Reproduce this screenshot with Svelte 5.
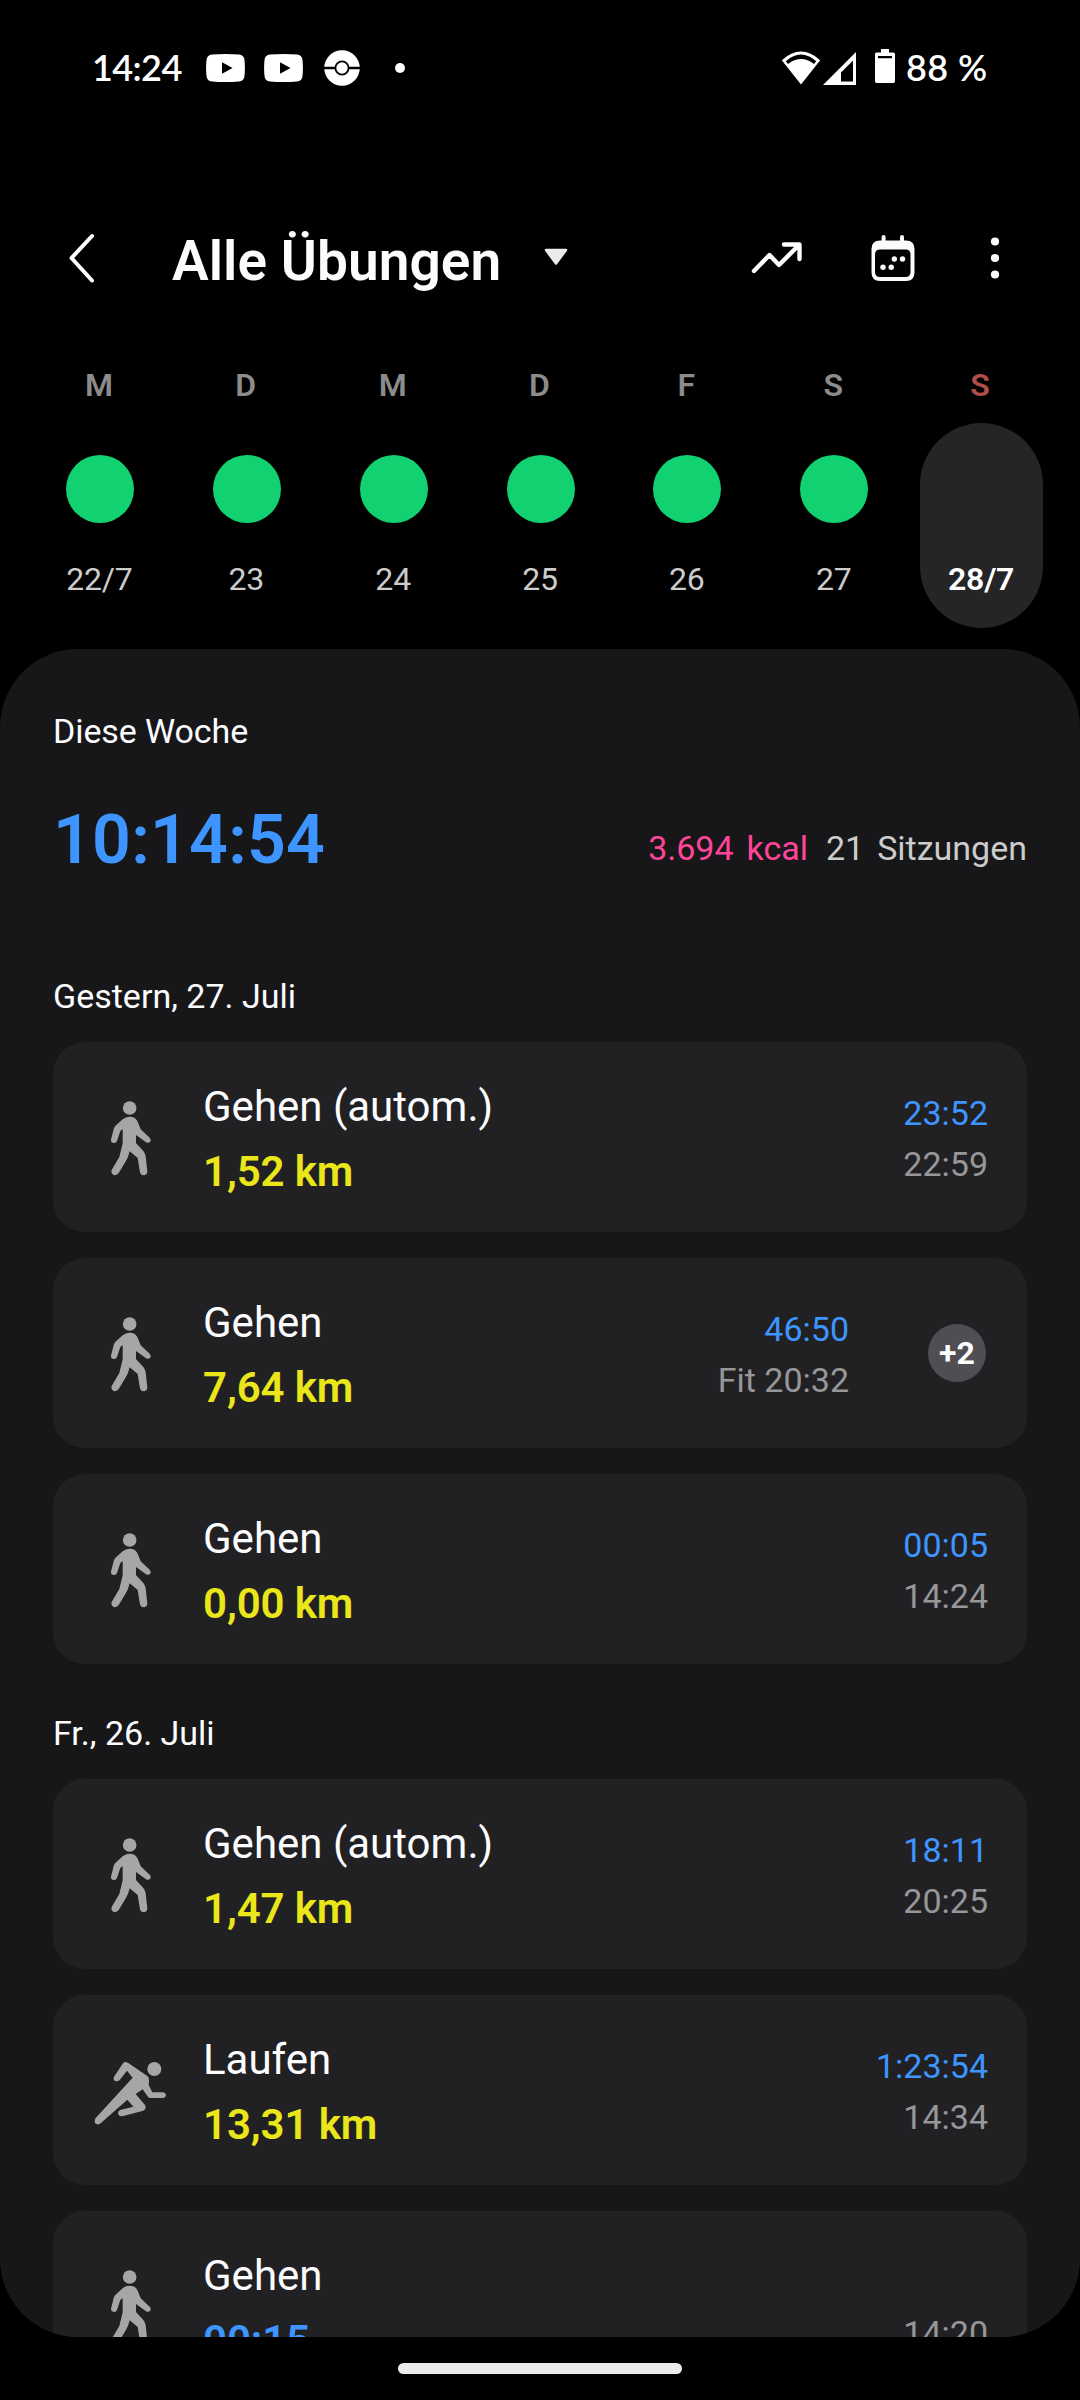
<script lang="ts">
  const days = [
    { letter: "M", date: "22/7", done: true },
    { letter: "D", date: "23", done: true },
    { letter: "M", date: "24", done: true },
    { letter: "D", date: "25", done: true },
    { letter: "F", date: "26", done: true },
    { letter: "S", date: "27", done: true },
    { letter: "S", date: "28/7", done: false, sunday: true, selected: true },
  ];

  const groups = [
    {
      label: "Gestern, 27. Juli",
      items: [
        { icon: "walk", name: "Gehen (autom.)", value: "1,52 km", duration: "23:52", time: "22:59" },
        { icon: "walk", name: "Gehen", value: "7,64 km", duration: "46:50", time: "Fit 20:32", more: "+2" },
        { icon: "walk", name: "Gehen", value: "0,00 km", duration: "00:05", time: "14:24" },
      ],
    },
    {
      label: "Fr., 26. Juli",
      items: [
        { icon: "walk", name: "Gehen (autom.)", value: "1,47 km", duration: "18:11", time: "20:25" },
        { icon: "run", name: "Laufen", value: "13,31 km", duration: "1:23:54", time: "14:34" },
        { icon: "walk", name: "Gehen", value: "00:15", timed: true, duration: "", time: "14:20" },
      ],
    },
  ];
</script>

<div class="screen">
  <div class="status">
    <span class="clock">14:24</span>
    {#each [0, 1] as n (n)}
      <svg class="youtube" width="39" height="28" viewBox="0 0 39 28">
        <path
          fill="#fff"
          fill-rule="evenodd"
          d="M6 .5Q19.500 -.5 33 .5Q38 1 38.500 6Q39.300 14 38.500 22Q38 27 33 27.500Q19.500 28.500 6 27.500Q1 27 .5 22Q-.3 14 .5 6Q1 1 6 .5ZM16 8.300V19.700L26.500 14Z"
        />
      </svg>
    {/each}
    <svg class="ball" width="36" height="36" viewBox="0 0 36 36">
      <circle cx="18" cy="18" r="17.800" fill="#fff" />
      <path d="M0 18H36" stroke="#000" stroke-width="2.400" />
      <circle cx="18" cy="18" r="6.600" fill="#fff" stroke="#000" stroke-width="1.800" />
    </svg>
    <span class="dot"></span>

    <svg class="wifi" width="40" height="34" viewBox="0 0 40 34">
      <path d="M20 33.500L.8 9.200Q20 -8 39.200 9.200Z" fill="#fff" />
      <path d="M4.800 10.200Q20 -3 35.200 10.200L33 13Q20 3 7 13Z" fill="#000" />
    </svg>
    <svg class="signal" width="33" height="33" viewBox="0 0 33 33">
      <path fill="#fff" fill-rule="evenodd" d="M33 0V33H0ZM30 8.500L18 20.500V29.500H30Z" />
    </svg>
    <svg class="battery" width="20" height="34" viewBox="0 0 20 34">
      <path
        fill="#fff"
        fill-rule="evenodd"
        d="M6 0H14V3.500H18.500Q20 3.500 20 5V32Q20 34 18.500 34H1.500Q0 34 0 32V5Q0 3.500 1.500 3.500H6ZM3 7V9.200H17V7Z"
      />
    </svg>
    <span class="percent">88 %</span>
  </div>

  <header>
    <svg class="back" width="30" height="54" viewBox="0 0 30 54">
      <path d="M25 5L4.500 27L25 49.500" fill="none" stroke="#fff" stroke-width="4" stroke-linecap="round" stroke-linejoin="round" />
    </svg>
    <h1>Alle Übungen</h1>
    <svg class="caret" width="24" height="18" viewBox="0 0 24 18">
      <path d="M2 2H22L12 15.500Z" fill="#ebebeb" stroke="#ebebeb" stroke-width="2.500" stroke-linejoin="round" />
    </svg>

    <svg class="trend" width="52" height="34" viewBox="0 0 52 34">
      <path
        d="M3 30L18.500 14L28 24L48 4M33 3.500H48.500V18"
        fill="none"
        stroke="#fcfcff"
        stroke-width="4.400"
        stroke-linecap="round"
        stroke-linejoin="round"
      />
    </svg>
    <svg class="calendar" width="44" height="48" viewBox="0 0 44 48">
      <path d="M12.600 3V10M31 3V10" stroke="#fcfcff" stroke-width="4" stroke-linecap="round" />
      <path
        fill="#fcfcff"
        fill-rule="evenodd"
        d="M9 6.500H35Q43.500 6.500 43.500 15V38.500Q43.500 47 35 47H9Q.5 47 .5 38.500V15Q.5 6.500 9 6.500ZM9 15.500Q4 15.500 4 20.500V38Q4 43 9 43H34.500Q39.500 43 39.500 38V20.500Q39.500 15.500 34.500 15.500Z"
      />
      <g fill="#fcfcff">
        <circle cx="12" cy="33.300" r="2.700" />
        <circle cx="20.200" cy="33.300" r="2.700" />
        <circle cx="23.300" cy="25" r="2.700" />
        <circle cx="31.500" cy="25" r="2.700" />
      </g>
    </svg>
    <svg class="more" width="10" height="44" viewBox="0 0 10 44">
      <g fill="#fcfcff">
        <circle cx="5" cy="5.500" r="4.100" />
        <circle cx="5" cy="22" r="4.100" />
        <circle cx="5" cy="38.500" r="4.100" />
      </g>
    </svg>
  </header>

  <div class="week">
    {#each days as day}
      <div class="day" class:selected={day.selected}>
        <span class="letter" class:sunday={day.sunday}>{day.letter}</span>
        <div class="pill">
          <span class="ring" class:done={day.done}></span>
          <span class="date">{day.date}</span>
        </div>
      </div>
    {/each}
  </div>

  <main>
    <h2>Diese Woche</h2>
    <div class="summary">
      <span class="total">10:14:54</span>
      <span class="stats"><span class="kcal">3.694 kcal</span><span>21 Sitzungen</span></span>
    </div>

    {#each groups as group}
      <section>
        <h3>{group.label}</h3>
        {#each group.items as item}
          <div class="card">
            <svg class="sport" width="120" height="114" viewBox="0 0 360 342">
              {#if item.icon === "walk"}
                <g fill="#a6a6a6">
                  <circle cx="149" cy="84" r="20.500" />
                  <path
                    d="M148 110C160 110 168 114 173 125L182 148L209 173Q216 182 208 187Q204 190 198 187L168 165V189L190 213Q196 220 197 229L202 274Q202 284 192 286Q182 286 180 277L173 234L149 214Q145 233 136 246L116 279Q110 287 101 285Q92 280 95 270L118 231L128 190V147L121 153L111 183Q108 190 101 189Q92 187 93 179L101 147Q103 140 109 135L128 118Q137 110 148 110Z"
                  />
                </g>
              {:else}
                <g transform="translate(0 -9)">
                  <circle cx="223" cy="117" r="21" fill="#a6a6a6" />
                  <path
                    d="M138 96Q142 97 146 100L203 139Q209 145 207 153L206 165L217 187H250Q258 189 258 196Q258 203 250 204H211Q205 204 202 198L188 178L167 192L195 225Q201 236 190 242L127 259Q116 260 114 250Q114 243 121 240L160 230L142 209L62 280Q53 287 45 279Q41 271 47 264L158 143L141 122L119 150Q111 156 104 152Q98 146 102 140L129 100Q133 95 138 96Z"
                    fill="#a6a6a6"
                  />
                </g>
              {/if}
            </svg>
            <div class="info">
              <span class="name">{item.name}</span>
              <span class="value" class:timed={item.timed}>{item.value}</span>
            </div>
            <div class="times">
              <span class="duration">{item.duration}</span>
              <span class="time">{item.time}</span>
            </div>
            {#if item.more}
              <span class="badge">{item.more}</span>
            {/if}
          </div>
        {/each}
      </section>
    {/each}
  </main>

  <div class="nav"><span class="handle"></span></div>
</div>

<style>
  :global(body) {
    background: #000;
  }
  .screen {
    width: 1080px;
    height: 2400px;
    overflow: hidden;
    background: #000;
    color: #fcfcff;
    font-family: Roboto, sans-serif;
  }
  svg {
    display: block;
    flex: none;
  }
  h1,
  h2,
  h3 {
    margin: 0;
  }

  .status {
    display: flex;
    align-items: center;
    height: 136px;
    padding: 0 94px 0 92px;
    font: 600 36px/44px Lato, sans-serif;
    color: #fff;
    white-space: nowrap;
  }
  .clock {
    width: 114px;
    margin-top: -3px;
    letter-spacing: -0.6px;
  }
  .youtube {
    margin-right: 19px;
  }
  .ball {
    margin-left: 2px;
  }
  .dot {
    width: 10px;
    height: 10px;
    margin-left: 35px;
    border-radius: 50%;
    background: #fff;
  }
  .wifi {
    margin-left: auto;
  }
  .signal {
    margin-left: 2px;
  }
  .battery {
    margin: -4px 11px 0 19px;
  }
  .percent {
    width: 80px;
    margin-top: -3px;
    letter-spacing: 0.4px;
  }

  header {
    display: flex;
    align-items: center;
    height: 100px;
    margin-top: 72px;
    padding: 0 80px 0 67px;
  }
  h1 {
    margin: 6px 0 0 75px;
    width: 372px;
    font-size: 55px;
    line-height: 64px;
    font-weight: 600;
    letter-spacing: 0.05px;
    white-space: nowrap;
  }
  .caret {
    margin-top: -2px;
  }
  .trend {
    margin-left: auto;
  }
  .calendar {
    margin-left: 68px;
  }
  .more {
    margin-left: 75px;
  }

  .week {
    display: flex;
    height: 284px;
    padding: 57px 26px 0;
  }
  .day {
    flex: 1;
    display: flex;
    flex-direction: column;
    align-items: center;
    font-size: 32px;
    line-height: 40px;
  }
  .letter {
    margin-right: 1px;
    color: #8c8c8c;
    font-weight: 600;
  }
  .sunday {
    color: #b04e4a;
  }
  .pill {
    display: flex;
    flex-direction: column;
    align-items: center;
    width: 123px;
    height: 205px;
    margin: 18px 0 0 1px;
    border-radius: 62px;
  }
  .selected .pill {
    background: #252527;
  }
  .ring {
    width: 68px;
    height: 68px;
    margin: 32px 0 36px;
    border-radius: 50%;
  }
  .done {
    background: #12d171;
  }
  .date {
    margin-right: 1px;
    color: #ccc;
    letter-spacing: -0.2px;
  }
  .selected .date {
    margin-right: 0;
    color: #fff;
    font-weight: 600;
  }

  main {
    box-sizing: border-box;
    height: 1688px;
    padding: 60px 53px 0;
    overflow: hidden;
    border-radius: 78px;
    background: #171719;
  }
  h2,
  h3,
  .stats {
    font-size: 34px;
    line-height: 44px;
    font-weight: 400;
  }
  h2 {
    letter-spacing: -0.1px;
  }
  .summary {
    display: flex;
    justify-content: space-between;
    align-items: flex-end;
    margin-top: 47px;
    margin-bottom: 94px;
  }
  .total {
    color: #3e95ff;
    font-size: 68px;
    line-height: 80px;
    font-weight: 600;
    letter-spacing: 0.25px;
  }
  .stats {
    display: flex;
    gap: 18px;
    padding-bottom: 10px;
    color: #ccc;
    word-spacing: 4.5px;
  }
  .kcal {
    color: #ff4598;
  }

  section + section {
    margin-top: 47px;
  }
  h3 {
    margin-bottom: 24px;
  }
  .card {
    display: flex;
    box-sizing: border-box;
    height: 190px;
    padding: 0 39px 0 27px;
    border-radius: 32px;
    background: #212123;
  }
  .card + .card {
    margin-top: 26px;
  }
  .sport {
    margin-top: 38px;
  }
  .info {
    display: flex;
    flex-direction: column;
    gap: 15px;
    margin: 40px auto 0 3px;
    font-size: 42px;
    line-height: 50px;
  }
  .value {
    color: #ebe61a;
    font-weight: 600;
    letter-spacing: -0.1px;
  }
  .value.timed {
    color: #3e95ff;
  }
  .times {
    display: flex;
    flex-direction: column;
    gap: 7px;
    padding-top: 49px;
    text-align: right;
    font-size: 34px;
    line-height: 44px;
  }
  .duration {
    height: 44px;
    color: #3e95ff;
  }
  .time {
    color: #97979a;
  }
  .badge {
    width: 58px;
    height: 58px;
    margin: 66px 2px 0 79px;
    border-radius: 50%;
    background: #4f4e53;
    text-align: center;
    font-size: 32px;
    line-height: 59px;
    font-weight: 700;
  }

  .nav {
    display: flex;
    justify-content: center;
    padding-top: 26px;
  }
  .handle {
    width: 284px;
    height: 11px;
    border-radius: 6px;
    background: #ebebeb;
  }
</style>
